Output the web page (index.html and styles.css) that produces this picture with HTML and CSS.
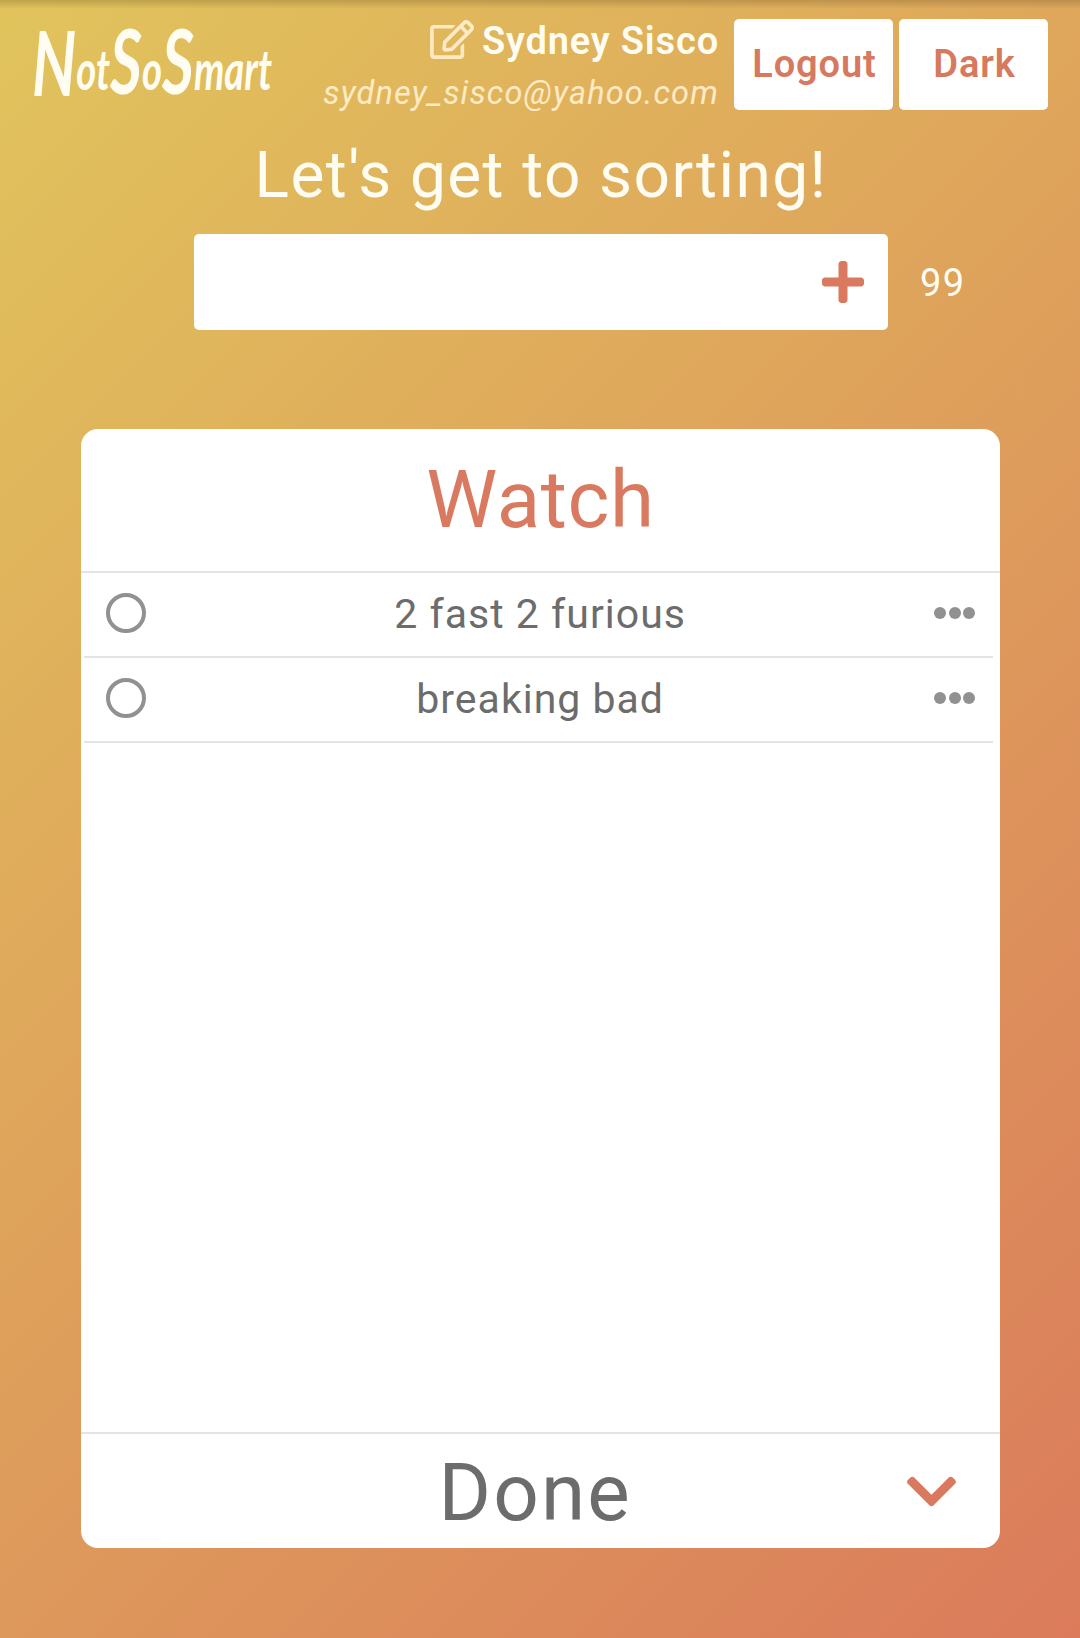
FILE: index.html
```html
<!DOCTYPE html>
<html lang="en">
<head>
<meta charset="utf-8">
<title>NotSoSmart</title>
<link rel="stylesheet" href="styles.css">
</head>
<body>
<header class="topbar">
  <svg class="logo" viewBox="0 0 248 91" role="img" aria-label="NotSoSmart">
    <text class="logo-text" x="2" y="77" textLength="240" lengthAdjust="spacingAndGlyphs"><tspan class="logo-cap">N</tspan><tspan dy="-6">ot</tspan><tspan class="logo-cap" dy="4">S</tspan><tspan dy="-4">o</tspan><tspan class="logo-cap" dy="4">S</tspan><tspan dy="-4">mart</tspan></text>
  </svg>
  <div class="user">
    <div class="user-name">
      <svg class="edit-icon" viewBox="0 0 576 512"><path d="M402.3 344.9l32-32c5-5 13.7-1.5 13.7 5.7V464c0 26.5-21.5 48-48 48H48c-26.5 0-48-21.5-48-48V112c0-26.5 21.5-48 48-48h273.5c7.1 0 10.7 8.6 5.7 13.7l-32 32c-1.5 1.5-3.5 2.3-5.7 2.3H48v352h352V350.5c0-2.1.8-4.1 2.3-5.6zm156.6-201.8L296.3 405.7l-90.4 10c-26.2 2.9-48.5-19.2-45.6-45.6l10-90.4L432.9 17.1c22.9-22.9 59.9-22.9 82.7 0l43.2 43.2c22.9 22.9 22.9 60 .1 82.8zM460.1 174L402 115.9 216.2 301.8l-7.3 65.3 65.3-7.3L460.1 174zm64.8-79.7l-43.2-43.2c-4.1-4.1-10.8-4.1-14.8 0L436 82l58.1 58.1 30.9-30.9c4-4.2 4-10.8-.1-14.9z"/></svg>
      <span>Sydney Sisco</span>
    </div>
    <div class="user-email">sydney_sisco@yahoo.com</div>
  </div>
  <button class="btn btn-logout">Logout</button>
  <button class="btn btn-dark">Dark</button>
</header>

<h1 class="headline">Let's get to sorting!</h1>

<div class="entry">
  <div class="entry-box">
    <svg class="plus-icon" viewBox="0 32 448 448"><path d="M416 208H272V64c0-17.67-14.33-32-32-32h-32c-17.67 0-32 14.33-32 32v144H32c-17.67 0-32 14.33-32 32v32c0 17.67 14.33 32 32 32h144v144c0 17.67 14.33 32 32 32h32c17.67 0 32-14.33 32-32V304h144c17.67 0 32-14.33 32-32v-32c0-17.67-14.33-32-32-32z"/></svg>
  </div>
  <span class="counter">99</span>
</div>

<main class="card">
  <h2 class="card-title">Watch</h2>
  <ul class="items">
    <li class="item">
      <span class="check"></span>
      <span class="item-text">2 fast 2 furious</span>
      <span class="dots"><i></i><i></i><i></i></span>
    </li>
    <li class="item">
      <span class="check"></span>
      <span class="item-text">breaking bad</span>
      <span class="dots"><i></i><i></i><i></i></span>
    </li>
  </ul>
  <footer class="done">
    <span class="done-text">Done</span>
    <svg class="chevron" viewBox="5 123 438 266"><path d="M207.029 381.476L12.686 187.132c-9.373-9.373-9.373-24.569 0-33.941l22.667-22.667c9.357-9.357 24.522-9.375 33.901-.04L224 284.505l154.745-154.021c9.379-9.335 24.544-9.317 33.901.04l22.667 22.667c9.373 9.373 9.373 24.569 0 33.941L240.971 381.476c-9.373 9.372-24.569 9.372-33.942 0z"/></svg>
  </footer>
</main>
</body>
</html>
```
FILE: styles.css
```css
* { box-sizing: border-box; }

body {
  margin: 0;
  height: 1638px;
  overflow: hidden;
  font-family: Roboto, "Liberation Sans", sans-serif;
  color: #fffdf2;
  background:
    linear-gradient(rgba(80, 60, 20, .24), rgba(80, 60, 20, 0)) 0 0 / 100% 9px no-repeat,
    linear-gradient(135deg, #e1c45c 0%, #db7b5b 100%);
}

h1, h2, ul { margin: 0; padding: 0; font-weight: 400; }

.topbar {
  display: flex;
  height: 110px;
  padding: 19px 32px 0 30px;
}

.logo { width: 248px; height: 91px; overflow: visible; }
.logo-text {
  font: italic 700 56px Lato, sans-serif;
  fill: #fffdf2;
}
.logo-cap { font-size: 90px; }

.user {
  margin-left: auto;
  margin-right: 15px;
  text-align: right;
  line-height: 44px;
  white-space: nowrap;
}
.user-name {
  display: flex;
  justify-content: flex-end;
  gap: 8px;
  font-size: 38px;
  font-weight: 600;
  letter-spacing: .85px;
}
.edit-icon { width: 44px; height: 39px; margin-top: 1px; fill: #ffeac4; }
.user-email {
  margin-top: 8px;
  font-size: 32.5px;
  font-style: italic;
  color: #ffeac4;
  letter-spacing: 1.15px;
}

.btn {
  height: 91px;
  padding: 0 0 1px 2px;
  border: 0;
  border-radius: 5px;
  background: #fff;
  font: 600 38px Roboto, sans-serif;
  letter-spacing: .9px;
  color: #d6795f;
}
.btn-logout { width: 159px; margin-right: 6px; }
.btn-dark { width: 149px; }

.headline {
  margin-top: 26px;
  padding-left: 2px;
  font-size: 64px;
  line-height: 80px;
  letter-spacing: 1.4px;
  text-align: center;
  white-space: nowrap;
}

.entry {
  display: flex;
  align-items: center;
  height: 96px;
  margin: 18px 0 0 194px;
}
.entry-box {
  display: flex;
  align-items: center;
  justify-content: flex-end;
  width: 694px;
  height: 96px;
  padding-right: 24px;
  border-radius: 5px;
  background: #fff;
}
.plus-icon { width: 42px; height: 42px; fill: #d9795f; }
.counter { margin-left: 32px; padding-top: 2px; font-size: 38px; letter-spacing: 1.5px; }

.card {
  display: flex;
  flex-direction: column;
  width: 919px;
  height: 1119px;
  margin: 99px 0 0 81px;
  border-radius: 17px;
  background: #fff;
}
.card-title {
  height: 144px;
  border-bottom: 2px solid #e4e4e4;
  font-size: 80px;
  line-height: 143px;
  letter-spacing: .6px;
  text-align: center;
  color: #d9795f;
}

.items { flex: 1; list-style: none; padding: 0 7px 0 3px; }
.item {
  display: flex;
  align-items: center;
  justify-content: space-between;
  height: 85px;
  padding: 0 18px 0 22px;
  border-bottom: 2px solid #e4e4e4;
}
.check {
  width: 40px;
  height: 40px;
  margin-bottom: 4px;
  border: 4px solid #919191;
  border-radius: 50%;
}
.item-text {
  padding-bottom: 1px;
  font-size: 41px;
  letter-spacing: 1px;
  color: #6c6c6c;
  white-space: nowrap;
}
.dots { display: flex; gap: 2.4px; margin-bottom: 4px; }
.dots i { width: 12px; height: 12px; border-radius: 50%; background: #919191; }

.done {
  display: flex;
  align-items: center;
  justify-content: flex-end;
  height: 116px;
  padding-right: 44px;
  border-top: 2px solid #e4e4e4;
}
.done-text {
  margin-right: 275px;
  padding-top: 4px;
  font-size: 80px;
  line-height: 110px;
  letter-spacing: 2.2px;
  color: #6c6c6c;
}
.chevron { width: 49px; height: 31px; fill: #d9795f; }
```
